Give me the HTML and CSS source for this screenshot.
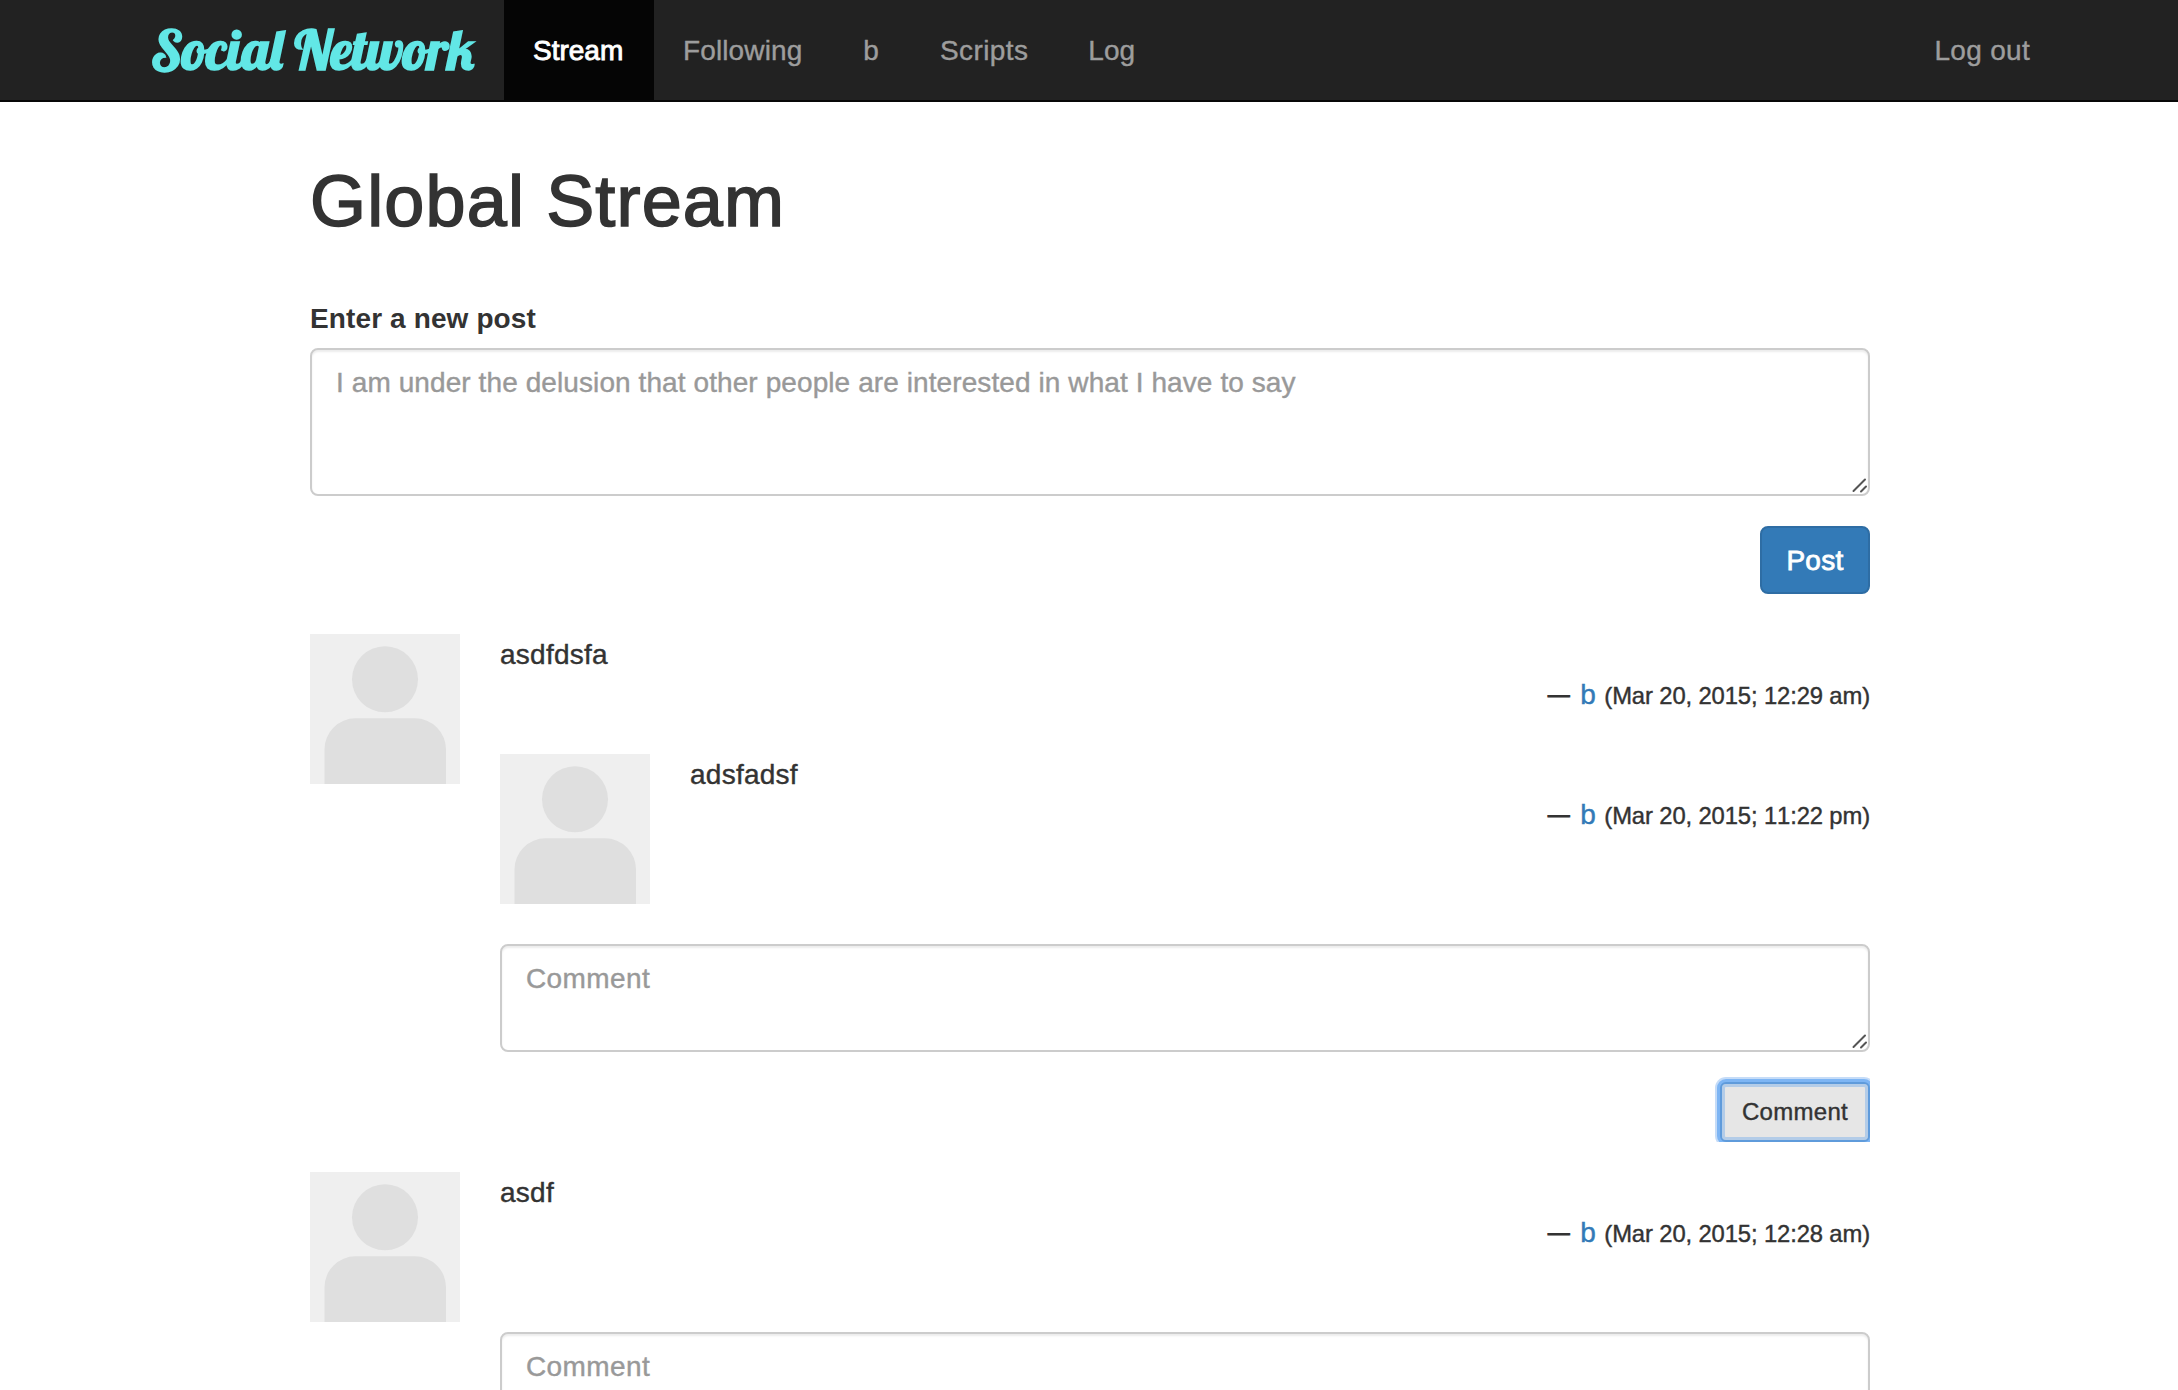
FILE: index.html
```html
<!DOCTYPE html>
<html lang="en">
<head>
<meta charset="utf-8">
<title>Social Network</title>
<link rel="stylesheet" href="styles.css">
</head>
<body>
<svg width="0" height="0" class="defs" aria-hidden="true">
  <symbol id="avatar" viewBox="0 0 150 150">
    <rect width="150" height="150" fill="#efefef"/>
    <circle cx="75" cy="45.3" r="33" fill="#dfdfdf"/>
    <path d="M14.5 150V115.3a31 31 0 0 1 31-31H105a31 31 0 0 1 31 31V150Z" fill="#dfdfdf"/>
  </symbol>
  <symbol id="grip" viewBox="0 0 20 20">
    <path d="M3.5 15 15 3.5M11 15.5 16 10.5" fill="none" stroke="#555" stroke-width="2" stroke-linecap="round"/>
  </symbol>
</svg>
<nav class="navbar">
  <a class="brand"><svg width="326" height="100"><text x="1" y="70" textLength="323" lengthAdjust="spacingAndGlyphs">Social Network</text></svg></a>
  <a class="nav-link active">Stream</a>
  <a class="nav-link following">Following</a>
  <a class="nav-link user">b</a>
  <a class="nav-link scripts">Scripts</a>
  <a class="nav-link">Log</a>
  <a class="nav-link logout">Log out</a>
</nav>
<main class="content">
  <h1>Global Stream</h1>
  <form class="new-post">
    <label for="post">Enter a new post</label>
    <div class="field"><textarea id="post" rows="3" placeholder="I am under the delusion that other people are interested in what I have to say"></textarea><svg class="grip"><use href="#grip"/></svg></div>
    <button type="button" class="btn btn-primary">Post</button>
  </form>
  <article class="media first">
    <svg class="avatar"><use href="#avatar"/></svg>
    <div class="media-body">
      <p>asdfdsfa</p>
      <p class="byline"><small class="dash">—</small> <a>b</a> <small>(Mar 20, 2015; 12:29 am)</small></p>
      <article class="media nested">
        <svg class="avatar"><use href="#avatar"/></svg>
        <div class="media-body">
          <p>adsfadsf</p>
          <p class="byline"><small class="dash">—</small> <a>b</a> <small>(Mar 20, 2015; 11:22 pm)</small></p>
        </div>
      </article>
      <form class="comment">
        <div class="field"><textarea rows="2" placeholder="Comment"></textarea><svg class="grip"><use href="#grip"/></svg></div>
        <button type="button" class="btn btn-small focused">Comment</button>
      </form>
    </div>
  </article>
  <article class="media second">
    <svg class="avatar"><use href="#avatar"/></svg>
    <div class="media-body">
      <p>asdf</p>
      <p class="byline"><small class="dash">—</small> <a>b</a> <small>(Mar 20, 2015; 12:28 am)</small></p>
      <form class="comment late">
        <div class="field"><textarea rows="2" placeholder="Comment"></textarea><svg class="grip"><use href="#grip"/></svg></div>
      </form>
    </div>
  </article>
</main>
</body>
</html>
```

FILE: styles.css
```css
* { box-sizing: border-box; }
html, body { height: 100%; overflow: hidden; }
body {
  margin: 0;
  background: #fff;
  color: #333;
  font: 28px/42px "Helvetica Neue", "Liberation Sans", Arial, sans-serif;
  -webkit-text-stroke: 0.4px;
}
.defs { position: absolute; }
p, h1 { margin: 0; }
a { color: #337ab7; }

.navbar {
  display: flex;
  height: 102px;
  padding: 0 118px 0 150px;
  background: #222;
  border-bottom: 2px solid #080808;
}
.brand { width: 354px; }
.brand svg { display: block; overflow: visible; }
.brand text {
  font: 400 54px Lobster, "Liberation Serif", serif;
  fill: #62e7e6;
  stroke: #62e7e6;
  stroke-width: 1.6px;
  -webkit-text-stroke: 1.6px #62e7e6;
}
.nav-link { padding: 30px; color: #9d9d9d; }
.nav-link.active { width: 150px; padding-left: 29px; color: #fff; background: #050505; -webkit-text-stroke: 0.9px #fff; }
.following { padding-left: 29px; letter-spacing: 0.12px; }
.user { padding-left: 31px; }
.scripts { padding-left: 31px; letter-spacing: 0.4px; }
.logout { margin-left: auto; letter-spacing: 0.3px; }

.content { width: 1560px; margin: 60px 0 0 310px; }
h1 {
  height: 79px;
  font-size: 72px;
  line-height: 79px;
  font-weight: 400;
  letter-spacing: 1.15px;
  -webkit-text-stroke: 1.6px #333;
}
form { display: flex; flex-direction: column; }
.new-post { margin-top: 57px; }
label { height: 40px; margin-bottom: 10px; font-weight: 700; letter-spacing: 0.12px; -webkit-text-stroke: 0; }
.field { position: relative; display: flex; }
textarea {
  width: 100%;
  padding: 12px 24px;
  border: 2px solid #ccc;
  border-radius: 8px;
  background: #fff;
  box-shadow: inset 0 2px 2px rgba(0, 0, 0, 0.075);
  font: inherit;
  letter-spacing: 0.09px;
  resize: none;
  overflow: hidden;
}
.new-post textarea { height: 148px; }
.comment textarea { height: 108px; letter-spacing: 0.4px; }
textarea::placeholder { color: #999; }
.grip { position: absolute; right: 0; bottom: 0; width: 20px; height: 20px; }
.btn {
  align-self: flex-end;
  padding: 0;
  border: 2px solid;
  border-radius: 8px;
  font: inherit;
}
.btn-primary {
  width: 110px;
  height: 68px;
  margin-top: 30px;
  padding-top: 1px;
  letter-spacing: 0.3px;
  color: #fff;
  background: #337ab7;
  border-color: #2e6da4;
  -webkit-text-stroke: 0.8px #fff;
}
.btn-small {
  width: 150px;
  height: 60px;
  margin-top: 30px;
  font-size: 24px;
  letter-spacing: 0.3px;
  color: #333;
  background: #e6e6e6;
  border-radius: 6px;
}
.focused {
  border-color: #5f9bdb;
  box-shadow: inset 0 0 0 3px #b3cce8, 0 0 0 3px #7db5f4, 0 0 0 5px #c5dcf8;
  clip-path: inset(-5px 0 0 -5px);
}

.media { display: flex; gap: 40px; }
.media.first { margin-top: 40px; }
.media.second { margin-top: 30px; }
.media.nested { margin-top: 40px; }
.avatar { flex: none; width: 150px; height: 150px; }
.media-body { flex: 1; }
.media-body p { height: 40px; letter-spacing: 0.25px; }
.media-body p.byline { text-align: right; letter-spacing: -0.12px; font-kerning: none; }
.byline a { margin-right: 1px; }
small { font-size: 23.8px; }
.dash { margin-right: 3px; font-size: 22px; line-height: 1; vertical-align: 2px; -webkit-text-stroke: 0.8px; }
.comment { margin-top: 40px; }
.comment.late { margin-top: 80px; }
```
